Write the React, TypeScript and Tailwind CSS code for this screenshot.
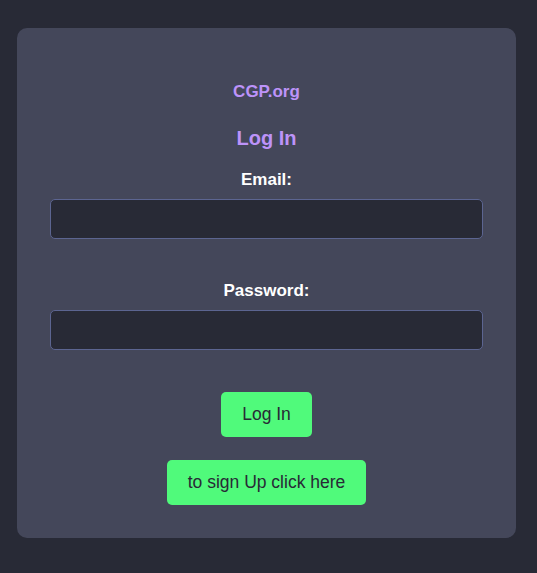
import React from "react";

export default function App() {
  return (
    <div className="min-h-screen w-full bg-[#282a36] pt-[28px] pl-[17px]" style={{ fontFamily: '"Liberation Sans", Arial, sans-serif' }}>
      <div className="w-[499px] rounded-[10px] bg-[#44475a] pt-[54px] pb-[33px] flex flex-col items-center">
        <div className="text-[17px] leading-[20px] font-bold text-[#bd93f9]">CGP.org</div>
        <h2 className="mt-[24px] text-[20px] leading-[24px] font-bold text-[#bd93f9]">Log In</h2>
        <label className="mt-[20px] text-[17px] leading-[20px] font-bold text-white">Email:</label>
        <input type="email" className="mt-[9px] w-[433px] h-[40px] rounded-[5px] border border-[#5c6591] bg-[#282a36] outline-none" />
        <label className="mt-[42px] text-[17px] leading-[20px] font-bold text-white">Password:</label>
        <input type="password" className="mt-[9px] w-[433px] h-[40px] rounded-[5px] border border-[#5c6591] bg-[#282a36] outline-none" />
        <button className="mt-[42px] w-[91px] h-[45px] rounded-[5px] bg-[#50fa7b] text-[17.5px] text-[#282a36]">Log In</button>
        <button className="mt-[23px] w-[199px] h-[45px] rounded-[5px] bg-[#50fa7b] text-[17.5px] text-[#282a36]">to sign Up click here</button>
      </div>
    </div>
  );
}
